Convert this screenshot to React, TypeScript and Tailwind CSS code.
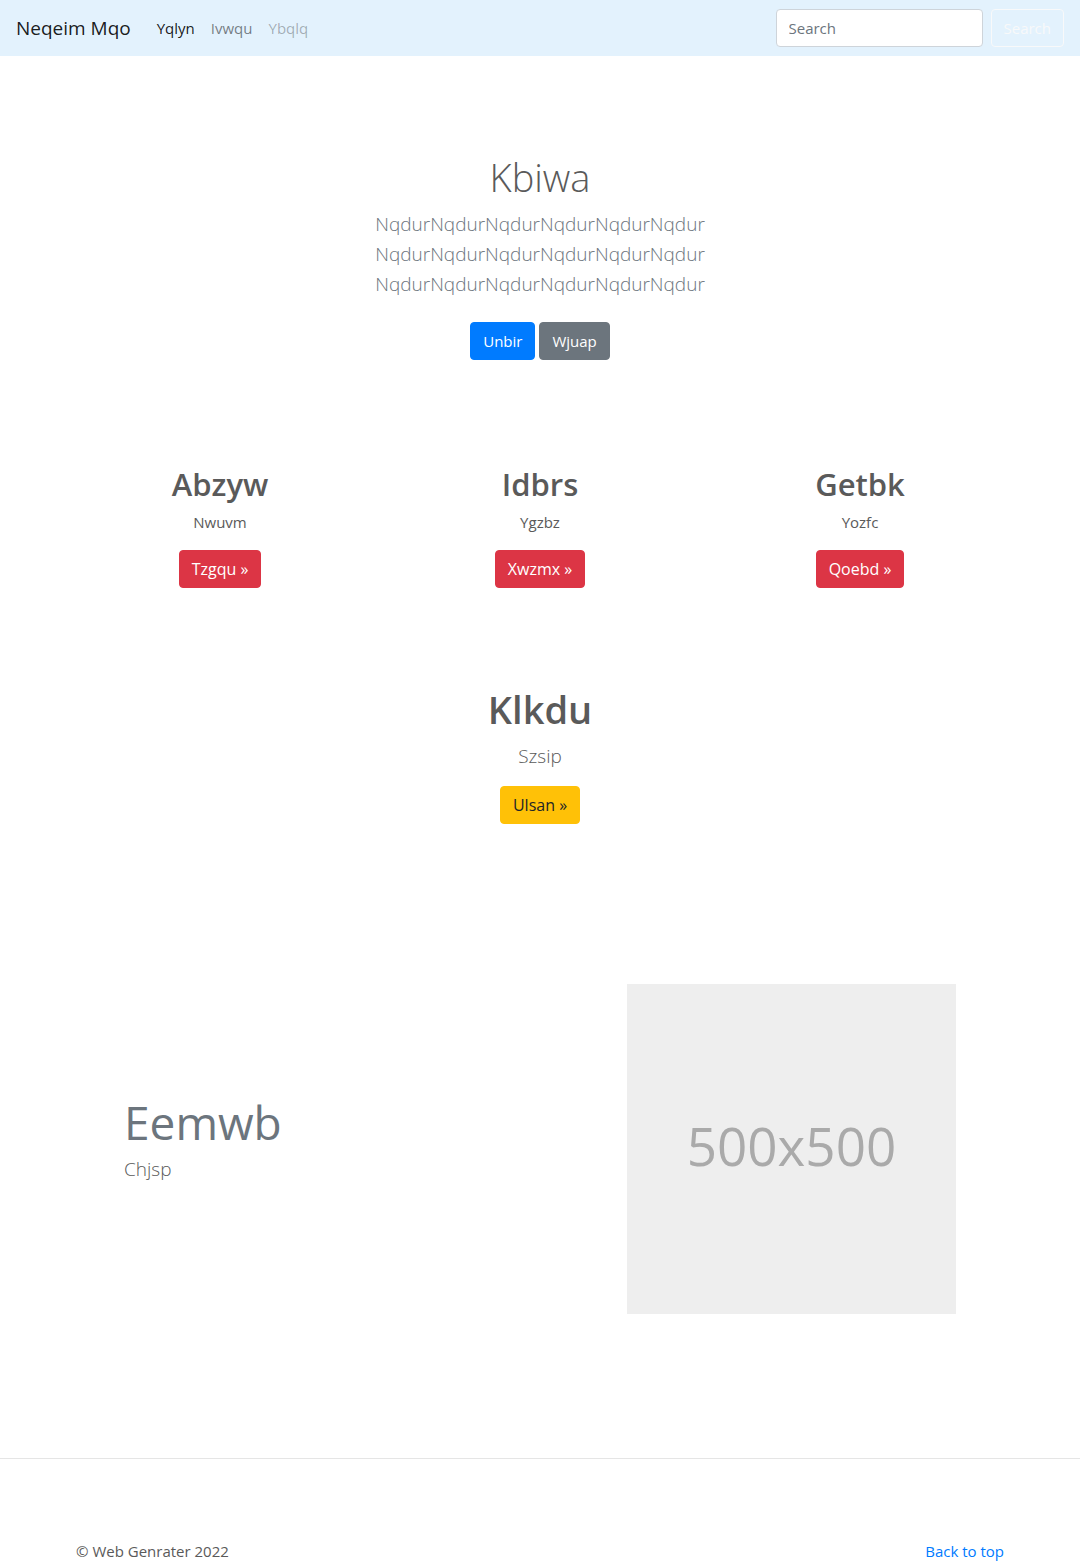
import React from "react";

const btn = "inline-block rounded border px-3 py-[6px] leading-6";

const features = [
  { title: "Abzyw", text: "Nwuvm", action: "Tzgqu »" },
  { title: "Idbrs", text: "Ygzbz", action: "Xwzmx »" },
  { title: "Getbk", text: "Yozfc", action: "Qoebd »" },
];

export default function App() {
  return (
    <div id="top" className="overflow-x-hidden bg-white font-['Segoe_UI','Open_Sans',sans-serif] text-[15px] leading-6 text-[#5a5a5a]">
      <nav className="flex items-center bg-[#e3f2fd] px-4 py-2">
        <a href="#" className="mr-[26px] text-[19px] leading-[30px] text-black/90">Neqeim Mqo</a>
        <div className="flex flex-1 gap-4 py-2">
          <a href="#" className="text-black/90">Yqlyn</a>
          <a href="#" className="text-black/50">Ivwqu</a>
          <a href="#" aria-disabled="true" className="text-black/30">Ybqlq</a>
        </div>
        <form className="flex items-center gap-2" onSubmit={(e) => e.preventDefault()}>
          <input
            type="search"
            aria-label="Search"
            placeholder="Search"
            className="h-[38px] w-[207px] rounded border border-[#ced4da] bg-white px-3 py-[6px] placeholder:text-[#6c757d]"
          />
          <button type="submit" className={`${btn} border-[#f8f9fa] text-[#f8f9fa]`}>Search</button>
        </form>
      </nav>

      <main>
        <section className="px-4 pt-[97px] pb-[88px] text-center">
          <h1 className="mb-2 text-[38px] leading-[48px] font-light">Kbiwa</h1>
          <p className="mb-[23px] text-[19px] leading-[30px] font-light text-[#6c757d]">
            NqdurNqdurNqdurNqdurNqdurNqdur
            <br />
            NqdurNqdurNqdurNqdurNqdurNqdur
            <br />
            NqdurNqdurNqdurNqdurNqdurNqdur
          </p>
          <div className="flex justify-center gap-1">
            <a href="#" className={`${btn} border-[#007bff] bg-[#007bff] text-white`}>Unbir</a>
            <a href="#" className={`${btn} border-[#6c757d] bg-[#6c757d] text-white`}>Wjuap</a>
          </div>
        </section>

        <section className="mx-auto grid max-w-[960px] grid-cols-3 pt-4 text-center">
          {features.map((f) => (
            <div key={f.title} className="px-4">
              <h2 className="mb-1.5 text-[31px] leading-[40px] font-semibold">{f.title}</h2>
              <p className="mb-4">{f.text}</p>
              <a href="#" className={`${btn} border-[#dc3545] bg-[#dc3545] text-base text-white`}>{f.action}</a>
            </div>
          ))}
        </section>

        <section className="px-4 pt-[97px] pb-24 text-center">
          <h2 className="mb-2 text-[38px] leading-[48px] font-semibold">Klkdu</h2>
          <p className="mb-[15px] text-[19px] leading-[30px] font-light">Szsip</p>
          <a href="#" className={`${btn} border-[#ffc107] bg-[#ffc107] text-base text-[#212529]`}>Ulsan »</a>
        </section>

        <section className="mx-auto my-16 flex max-w-[832px] items-center justify-between">
          <div>
            <h2 className="mb-1 text-[46px] leading-[56px] text-[#6c757d]">Eemwb</h2>
            <p className="mb-5 text-[19px] leading-[30px] font-light">Chjsp</p>
          </div>
          <div className="flex h-[330px] w-[329px] items-center justify-center bg-[#eeeeee] pb-2 text-[53px] leading-none text-[#aaaaaa]">
            500x500
          </div>
        </section>
      </main>

      <hr className="mt-36 mb-20 border-[#e5e5e5]" />
      <footer className="mx-auto flex max-w-[960px] justify-between px-4">
        <p>© Web Genrater 2022</p>
        <a href="#top" className="text-[#007bff]">Back to top</a>
      </footer>
    </div>
  );
}
